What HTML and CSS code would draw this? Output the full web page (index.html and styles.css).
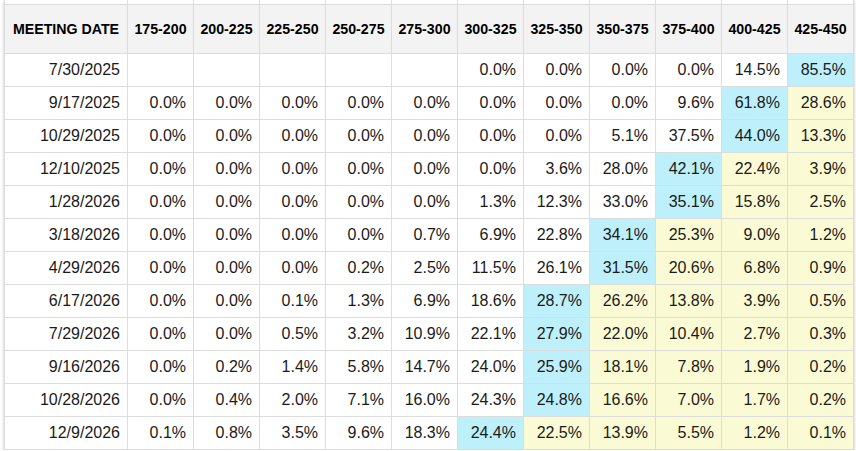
FILE: index.html
```html
<!DOCTYPE html>
<html>
<head>
<meta charset="utf-8">
<link rel="stylesheet" href="styles.css">
</head>
<body>
<div class="wrap">
<table class="prob">
<colgroup>
<col class="c-date">
<col class="c-num"><col class="c-num"><col class="c-num"><col class="c-num"><col class="c-num"><col class="c-num"><col class="c-num"><col class="c-num"><col class="c-num"><col class="c-num"><col class="c-num">
</colgroup>
<tr class="stub"><td></td><td></td><td></td><td></td><td></td><td></td><td></td><td></td><td></td><td></td><td></td><td></td></tr>
<tr class="head"><th>MEETING DATE</th><th>175-200</th><th>200-225</th><th>225-250</th><th>250-275</th><th>275-300</th><th>300-325</th><th>325-350</th><th>350-375</th><th>375-400</th><th>400-425</th><th>425-450</th></tr>
<tr><td>7/30/2025</td><td></td><td></td><td></td><td></td><td></td><td>0.0%</td><td>0.0%</td><td>0.0%</td><td>0.0%</td><td>14.5%</td><td class="hi">85.5%</td></tr>
<tr><td>9/17/2025</td><td>0.0%</td><td>0.0%</td><td>0.0%</td><td>0.0%</td><td>0.0%</td><td>0.0%</td><td>0.0%</td><td>0.0%</td><td>9.6%</td><td class="hi">61.8%</td><td class="lo">28.6%</td></tr>
<tr><td>10/29/2025</td><td>0.0%</td><td>0.0%</td><td>0.0%</td><td>0.0%</td><td>0.0%</td><td>0.0%</td><td>0.0%</td><td>5.1%</td><td>37.5%</td><td class="hi">44.0%</td><td class="lo">13.3%</td></tr>
<tr><td>12/10/2025</td><td>0.0%</td><td>0.0%</td><td>0.0%</td><td>0.0%</td><td>0.0%</td><td>0.0%</td><td>3.6%</td><td>28.0%</td><td class="hi">42.1%</td><td class="lo">22.4%</td><td class="lo">3.9%</td></tr>
<tr><td>1/28/2026</td><td>0.0%</td><td>0.0%</td><td>0.0%</td><td>0.0%</td><td>0.0%</td><td>1.3%</td><td>12.3%</td><td>33.0%</td><td class="hi">35.1%</td><td class="lo">15.8%</td><td class="lo">2.5%</td></tr>
<tr><td>3/18/2026</td><td>0.0%</td><td>0.0%</td><td>0.0%</td><td>0.0%</td><td>0.7%</td><td>6.9%</td><td>22.8%</td><td class="hi">34.1%</td><td class="lo">25.3%</td><td class="lo">9.0%</td><td class="lo">1.2%</td></tr>
<tr><td>4/29/2026</td><td>0.0%</td><td>0.0%</td><td>0.0%</td><td>0.2%</td><td>2.5%</td><td>11.5%</td><td>26.1%</td><td class="hi">31.5%</td><td class="lo">20.6%</td><td class="lo">6.8%</td><td class="lo">0.9%</td></tr>
<tr><td>6/17/2026</td><td>0.0%</td><td>0.0%</td><td>0.1%</td><td>1.3%</td><td>6.9%</td><td>18.6%</td><td class="hi">28.7%</td><td class="lo">26.2%</td><td class="lo">13.8%</td><td class="lo">3.9%</td><td class="lo">0.5%</td></tr>
<tr><td>7/29/2026</td><td>0.0%</td><td>0.0%</td><td>0.5%</td><td>3.2%</td><td>10.9%</td><td>22.1%</td><td class="hi">27.9%</td><td class="lo">22.0%</td><td class="lo">10.4%</td><td class="lo">2.7%</td><td class="lo">0.3%</td></tr>
<tr><td>9/16/2026</td><td>0.0%</td><td>0.2%</td><td>1.4%</td><td>5.8%</td><td>14.7%</td><td>24.0%</td><td class="hi">25.9%</td><td class="lo">18.1%</td><td class="lo">7.8%</td><td class="lo">1.9%</td><td class="lo">0.2%</td></tr>
<tr><td>10/28/2026</td><td>0.0%</td><td>0.4%</td><td>2.0%</td><td>7.1%</td><td>16.0%</td><td>24.3%</td><td class="hi">24.8%</td><td class="lo">16.6%</td><td class="lo">7.0%</td><td class="lo">1.7%</td><td class="lo">0.2%</td></tr>
<tr><td>12/9/2026</td><td>0.1%</td><td>0.8%</td><td>3.5%</td><td>9.6%</td><td>18.3%</td><td class="hi">24.4%</td><td class="lo">22.5%</td><td class="lo">13.9%</td><td class="lo">5.5%</td><td class="lo">1.2%</td><td class="lo">0.1%</td></tr>
</table>
</div>
</body>
</html>
```
FILE: styles.css
```css
html, body {
  margin: 0;
  padding: 0;
  background: #ffffff;
}
.wrap {
  padding: 0 0 0 4px;
  width: 849px;
}
.prob {
  border-collapse: collapse;
  table-layout: fixed;
  width: 849px;
  font-family: "Liberation Sans", Arial, sans-serif;
  color: #1a1a1a;
  box-shadow: 0 1px 3px rgba(0,0,0,0.25);
}
.c-date { width: 123px; }
.c-num { width: 66px; }
.prob td, .prob th {
  border: 1px solid #dcdcdc;
  padding: 0 7px 0 0;
  text-align: right;
  font-size: 16px;
  white-space: nowrap;
  overflow: hidden;
}
.prob tr { height: 33px; }
.prob tr.stub { height: 4px; }
.prob tr.stub td { border-top: none; padding: 0; }
.prob tr.head { height: 49px; }
.prob th {
  background: #f3f3f3;
  font-size: 14.2px;
  font-weight: bold;
  color: #000;
  text-align: center;
  padding: 0;
}
.prob td.hi { background: #bdf0fb; }
.prob td.lo { background: #fafad4; }
```
